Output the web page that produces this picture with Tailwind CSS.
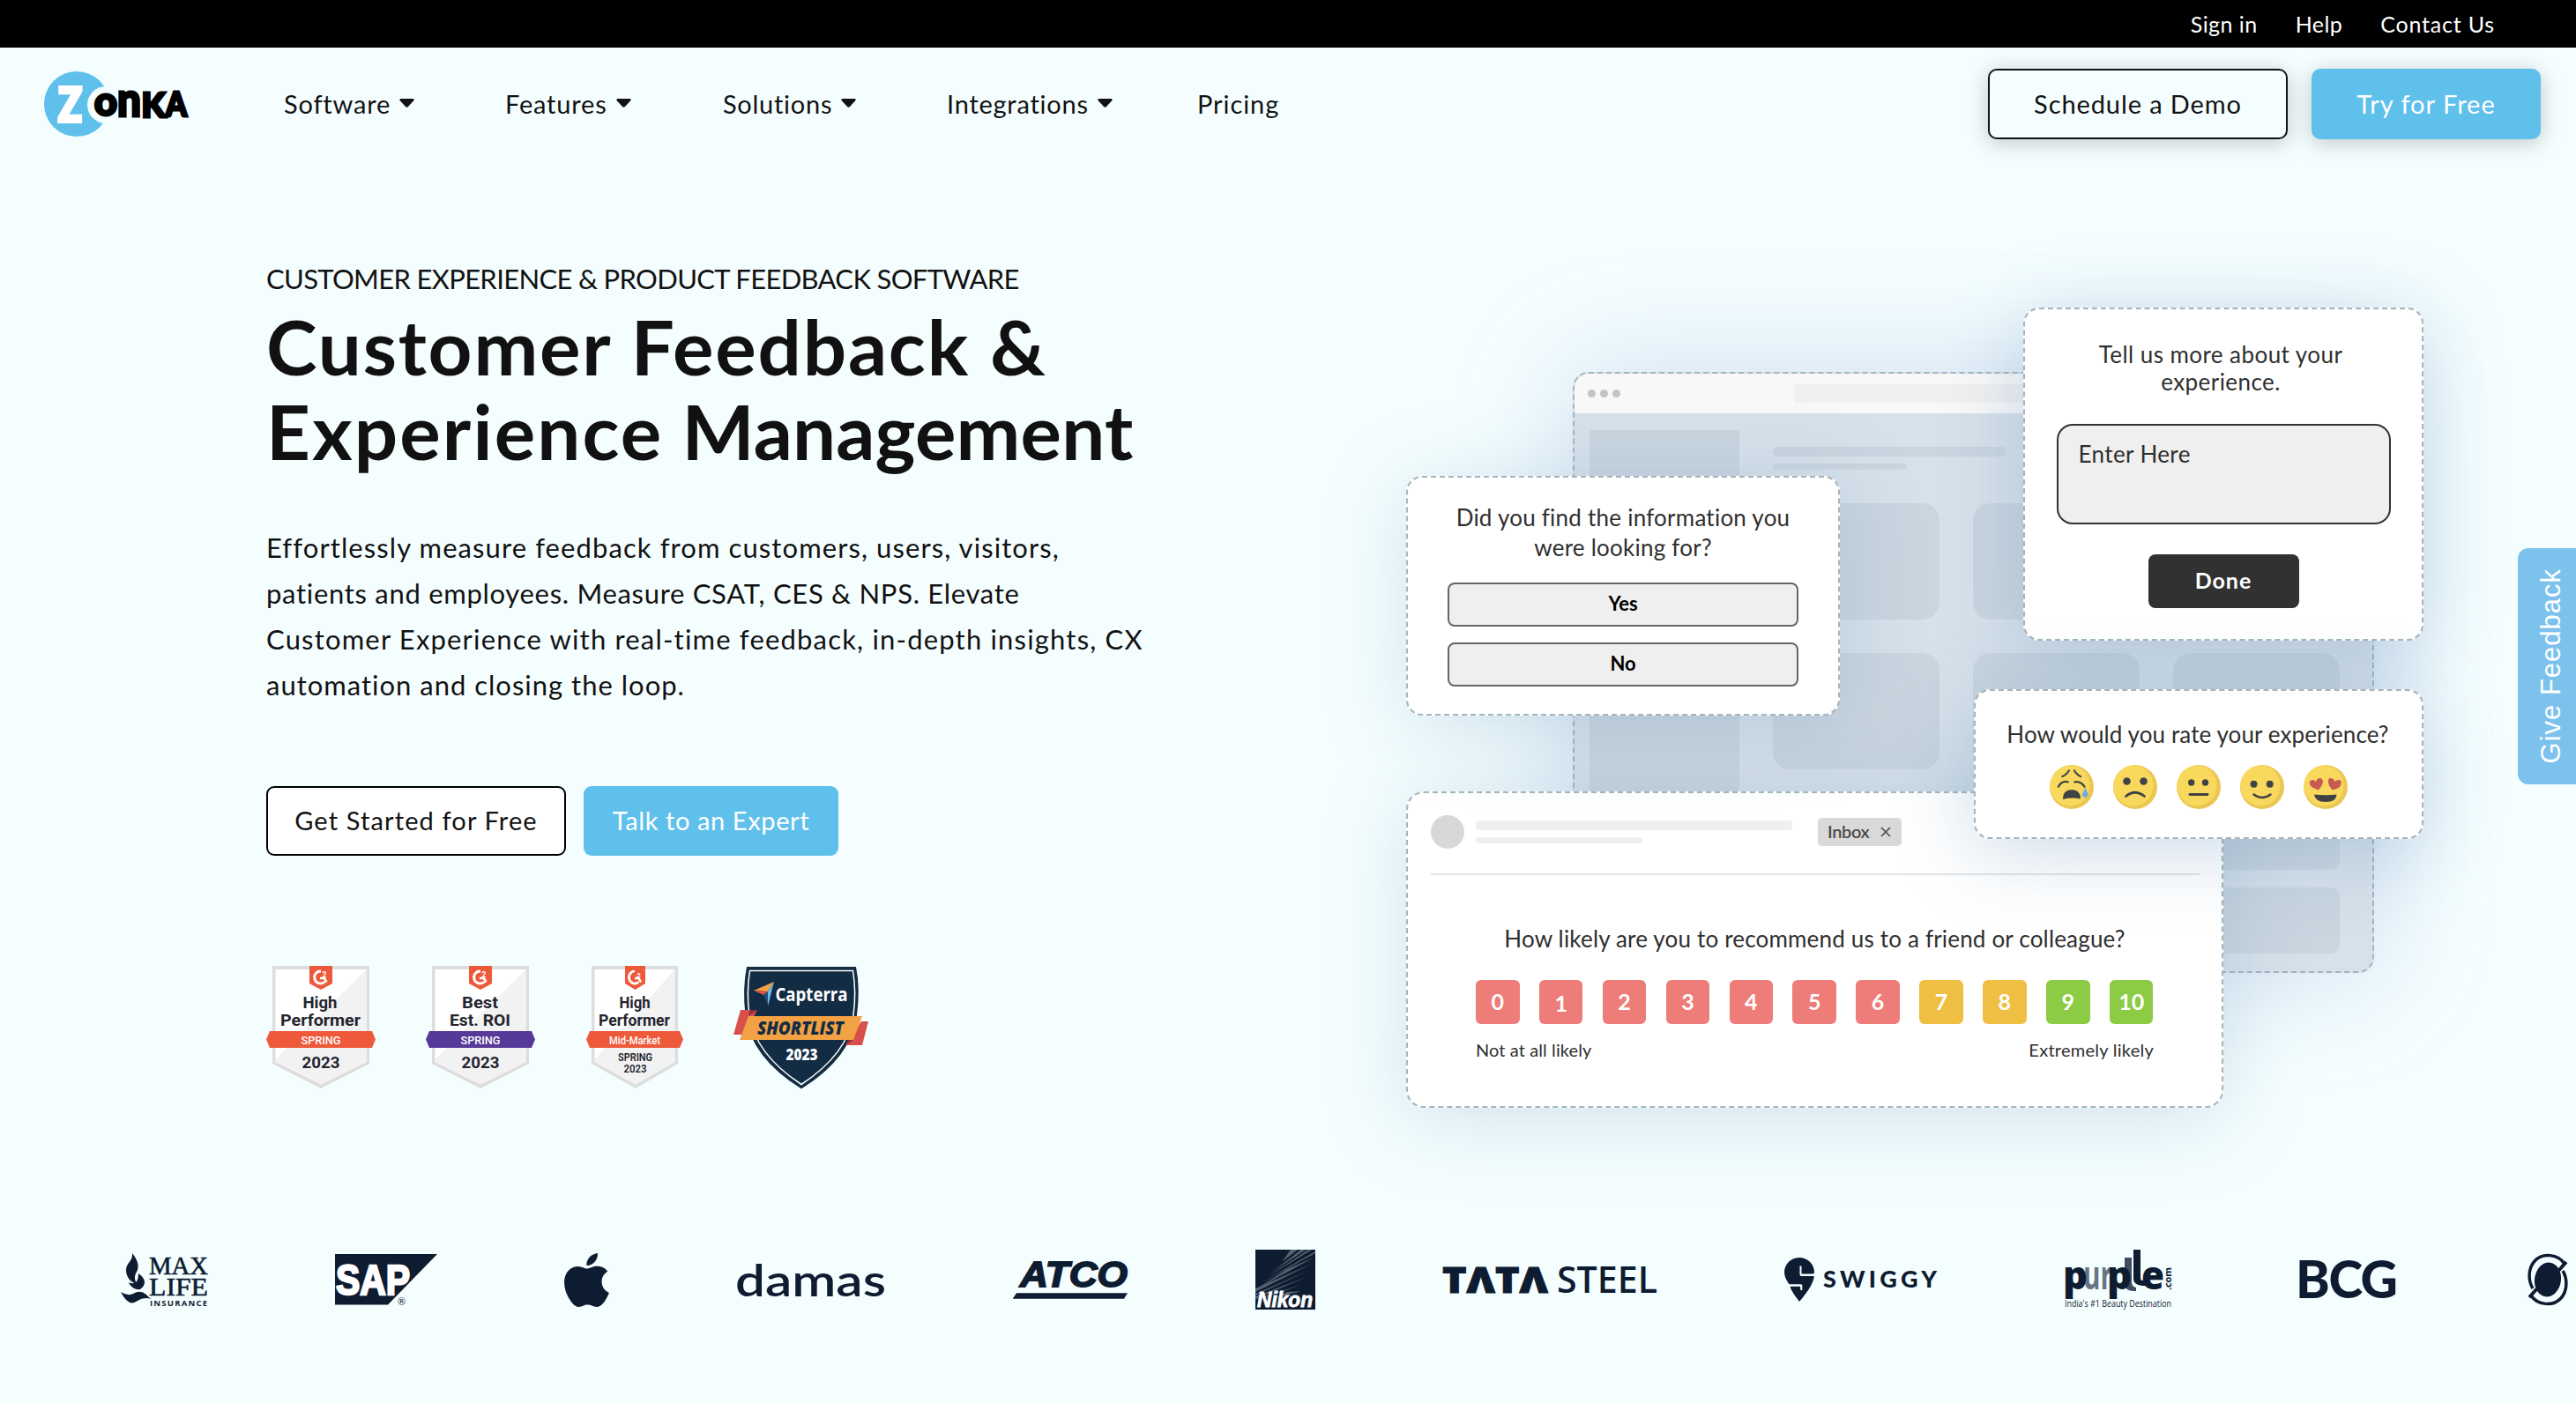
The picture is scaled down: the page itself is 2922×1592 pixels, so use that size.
<!DOCTYPE html>
<html lang="en">
<head>
<meta charset="utf-8">
<title>Zonka Feedback</title>
<script src="https://cdn.jsdelivr.net/npm/@tailwindcss/browser@4"></script>
</head>
<body class="w-[2922px] h-[1592px] overflow-hidden bg-[#f5feff] text-[#121212] font-['Lato',sans-serif] relative">

<!-- Utility bar -->
<div class="h-[54px] bg-black text-white flex items-center justify-end gap-[43px] pr-[92px] text-[25px] leading-none">
  <a class="tracking-[0.018em]">Sign in</a>
  <a class="tracking-[0.018em]">Help</a>
  <a class="tracking-[0.032em]">Contact Us</a>
</div>

<!-- Main navigation -->
<header class="h-32 flex items-center pl-[50px] pr-10 text-[29px] leading-none">
  <svg class="w-[168px] h-[76px] mr-[104px] -mt-px" viewBox="50 80 168 76">
    <circle cx="87" cy="118" r="37" fill="#5fc0ec"/>
    <circle cx="120" cy="119" r="21" fill="#f5feff"/>
    <text x="66" y="138" font-family="Lato" font-weight="900" font-size="54" fill="#fff" stroke="#fff" stroke-width="4" textLength="27" lengthAdjust="spacingAndGlyphs">Z</text>
    <g font-family="Lato" font-weight="900" stroke="#000" stroke-width="3" fill="#000">
      <text x="107" y="131" font-size="46" textLength="26" lengthAdjust="spacingAndGlyphs">o</text>
      <text x="133" y="132" font-size="53" textLength="27" lengthAdjust="spacingAndGlyphs">n</text>
      <text x="160.500" y="133" font-size="38" textLength="27" lengthAdjust="spacingAndGlyphs">K</text>
      <text x="188" y="132" font-size="37" textLength="24" lengthAdjust="spacingAndGlyphs">A</text>
    </g>
  </svg>
  <nav class="flex items-center -mt-0.5">
    <a class="flex items-center gap-2.5 w-[251px]"><span class="tracking-[0.028em]">Software</span><svg class="w-[17px] h-[10px]" viewBox="0 0 17 10"><path d="M1.500 0h14q2 .5.700 2.200L10 9q-1.500 1.500-3 0L.8 2.200Q-.5.500 1.500 0z" fill="#121212"/></svg></a>
    <a class="flex items-center gap-2.5 w-[247px]"><span class="tracking-[0.028em]">Features</span><svg class="w-[17px] h-[10px]" viewBox="0 0 17 10"><path d="M1.500 0h14q2 .5.700 2.200L10 9q-1.500 1.500-3 0L.8 2.200Q-.5.500 1.500 0z" fill="#121212"/></svg></a>
    <a class="flex items-center gap-2.5 w-[254px]"><span class="tracking-[0.025em]">Solutions</span><svg class="w-[17px] h-[10px]" viewBox="0 0 17 10"><path d="M1.500 0h14q2 .5.700 2.200L10 9q-1.500 1.500-3 0L.8 2.200Q-.5.500 1.500 0z" fill="#121212"/></svg></a>
    <a class="flex items-center gap-2.5 w-[284px]"><span class="tracking-[0.026em]">Integrations</span><svg class="w-[17px] h-[10px]" viewBox="0 0 17 10"><path d="M1.500 0h14q2 .5.700 2.200L10 9q-1.500 1.500-3 0L.8 2.200Q-.5.500 1.500 0z" fill="#121212"/></svg></a>
    <a class="tracking-[0.032em]">Pricing</a>
  </nav>
  <div class="ml-auto flex gap-[27px]">
    <a class="w-[340px] h-20 rounded-[10px] border-2 border-[#121212] bg-[#f5feff] flex items-center justify-center pb-0.5 tracking-[0.031em] shadow-[0_4px_24px_rgba(0,0,0,0.22)]">Schedule a Demo</a>
    <a class="w-[260px] h-20 rounded-[10px] bg-[#5fc0ec] text-white flex items-center justify-center pb-0.5 tracking-[0.035em] shadow-[0_4px_24px_rgba(0,0,0,0.22)]">Try for Free</a>
  </div>
</header>

<!-- Hero -->
<main class="flex pl-[302px] h-[1236px]">
  <section class="w-[1293px] pt-[114px]">
    <p class="text-[31px] leading-10 -tracking-[0.0215em]">CUSTOMER EXPERIENCE &amp; PRODUCT FEEDBACK SOFTWARE</p>
    <h1 class="mt-[9px] text-[87px] leading-24 font-bold text-[#111]"><span class="block tracking-[0.021em]">Customer Feedback &amp;</span><span class="block"><span class="tracking-[0.0245em]">Experience</span> <span class="tracking-[0.002em]">Management</span></span></h1>
    <p class="mt-[58px] text-[31px] leading-[52px] tracking-[0.035em] whitespace-nowrap"><span class="block">Effortlessly measure feedback from customers, users, visitors,</span><span class="block tracking-[0.0225em]">patients and employees. Measure CSAT, CES &amp; NPS. Elevate</span><span class="block tracking-[0.038em]">Customer Experience with real-time feedback, in-depth insights, CX</span><span class="block tracking-[0.032em]">automation and closing the loop.</span></p>
    <div class="mt-[89px] flex gap-5 text-[29px] leading-none">
      <a class="w-[340px] h-[79px] rounded-[9px] border-2 border-black bg-white flex items-center justify-center pb-0.5 tracking-[0.039em]">Get Started for Free</a>
      <a class="w-[289px] h-[79px] rounded-[9px] bg-[#5fc0ec] text-white flex items-center justify-center pb-0.5 tracking-[0.021em]">Talk to an Expert</a>
    </div>

    <!-- Award badges -->
    <div class="mt-[125px] flex items-start">
      <svg class="w-[124px] h-[140px]" viewBox="0 0 124 140" font-family="Roboto" font-weight="700" text-anchor="middle" fill="#23242f">
        <path d="M7 0h110v111l-55 28-55-28z" fill="#dcdedd"/><path d="M10.500 4h103v105L62 134.500 10.500 109z" fill="#fff"/><path d="M113.500 4v105L62 134.500 10.500 109v-3z" fill="#f2f2f2"/>
        <path d="M49 0h26v20l-13 7-13-7z" fill="#ee593b"/><path d="M62 6a7 7 0 1 0 4.500 12" fill="none" stroke="#fff" stroke-width="2.800"/><path d="M61 14h5l2.500 4.500" fill="none" stroke="#fff" stroke-width="2.600"/><text x="66" y="12.500" font-size="8.500" fill="#fff">2</text>
        <text x="61" y="48" font-size="19" textLength="39" lengthAdjust="spacingAndGlyphs">High</text>
        <text x="61.500" y="68" font-size="19" textLength="91" lengthAdjust="spacingAndGlyphs">Performer</text>
        <path d="M4 74h116l4 9.500-4 9.500H4l-4-9.500z" fill="#ee593b"/>
        <text x="62" y="88.500" font-size="12.500" font-weight="500" fill="#fff" textLength="45" lengthAdjust="spacingAndGlyphs">SPRING</text>
        <text x="62" y="115.500" font-size="19" textLength="43" lengthAdjust="spacingAndGlyphs">2023</text>
      </svg>
      <svg class="w-[124px] h-[140px] ml-[57px]" viewBox="0 0 124 140" font-family="Roboto" font-weight="700" text-anchor="middle" fill="#23242f">
        <path d="M7 0h110v111l-55 28-55-28z" fill="#dcdedd"/><path d="M10.500 4h103v105L62 134.500 10.500 109z" fill="#fff"/><path d="M113.500 4v105L62 134.500 10.500 109v-3z" fill="#f2f2f2"/>
        <path d="M49 0h26v20l-13 7-13-7z" fill="#ee593b"/><path d="M62 6a7 7 0 1 0 4.500 12" fill="none" stroke="#fff" stroke-width="2.800"/><path d="M61 14h5l2.500 4.500" fill="none" stroke="#fff" stroke-width="2.600"/><text x="66" y="12.500" font-size="8.500" fill="#fff">2</text>
        <text x="61.500" y="48" font-size="19" textLength="41" lengthAdjust="spacingAndGlyphs">Best</text>
        <text x="61.500" y="68" font-size="19" textLength="69" lengthAdjust="spacingAndGlyphs">Est. ROI</text>
        <path d="M4 74h116l4 9.500-4 9.500H4l-4-9.500z" fill="#573998"/>
        <text x="62" y="88.500" font-size="12.500" font-weight="500" fill="#fff" textLength="45" lengthAdjust="spacingAndGlyphs">SPRING</text>
        <text x="62" y="115.500" font-size="19" textLength="43" lengthAdjust="spacingAndGlyphs">2023</text>
      </svg>
      <svg class="w-[110px] h-[140px] ml-[58px]" viewBox="0 0 110 140" font-family="Roboto" font-weight="700" text-anchor="middle" fill="#23242f">
        <path d="M6 0h98v111l-48 28-50-28z" fill="#dcdedd"/><path d="M9.500 4h91v105L56 134.500 9.500 109z" fill="#fff"/><path d="M100.500 4v105L56 134.500 9.500 109v-3z" fill="#f2f2f2"/>
        <path d="M44 0h23v20l-11.500 7L44 20z" fill="#ee593b"/><path d="M55 6a6.500 7 0 1 0 4.500 12" fill="none" stroke="#fff" stroke-width="2.700"/><path d="M55 14h4.500l2.500 4.500" fill="none" stroke="#fff" stroke-width="2.500"/><text x="59.500" y="12.500" font-size="8" fill="#fff">2</text>
        <text x="55" y="48" font-size="19" textLength="35" lengthAdjust="spacingAndGlyphs">High</text>
        <text x="54.500" y="68" font-size="19" textLength="81" lengthAdjust="spacingAndGlyphs">Performer</text>
        <path d="M4 74h102l4 9.500-4 9.500H4l-4-9.500z" fill="#ee593b"/>
        <text x="55" y="88.500" font-size="12.500" font-weight="500" fill="#fff" textLength="58" lengthAdjust="spacingAndGlyphs">Mid-Market</text>
        <text x="55.500" y="108" font-size="13.500" font-weight="600" textLength="39" lengthAdjust="spacingAndGlyphs">SPRING</text>
        <text x="55.500" y="120.500" font-size="13" font-weight="600" textLength="26" lengthAdjust="spacingAndGlyphs">2023</text>
      </svg>
      <svg class="w-[154px] h-[140px] ml-[57px]" viewBox="0 -1 154 140" font-family="'Open Sans'" font-weight="700">
        <path d="M15 0h124q5 25 1 55-6 48-63 83.500Q20 103 13.500 55q-3.500-30 1.500-55z" fill="#122c43"/>
        <path d="M18.500 4.500h117q4 25 .5 50-6 44-59 79-53-35-59-79-3.500-25 .5-50z" fill="none" stroke="#fff" stroke-width="1.500"/>
        <path d="M23 27l23-10-7 11z" fill="#f3a146"/><path d="M46 17l-7 28V28z" fill="#68b8e8"/><path d="M39 28v15l-5-11z" fill="#1b4f7b"/><path d="M23 27l16 1-5 4z" fill="#d8554a"/>
        <text x="47.500" y="38.500" font-size="22" fill="#fff" textLength="82" lengthAdjust="spacingAndGlyphs" font-weight="700">Capterra</text>
        <path d="M8 49h19L12 77H0z" fill="#d8504b"/><path d="M145 62h8l-7 27h-19z" fill="#d8504b"/><path d="M17 56l10-7h-8z" fill="#8d2f35"/><path d="M127 89l9-6h-6z" fill="#8d2f35"/>
        <path d="M17 56h129l-10 27H7z" fill="#f2a144"/>
        <text x="27" y="77" font-size="20.500" font-style="italic" font-weight="800" fill="#122c43" textLength="98" lengthAdjust="spacingAndGlyphs">SHORTLIST</text>
        <text x="59.500" y="106" font-size="17.500" font-weight="800" fill="#fff" textLength="36" lengthAdjust="spacingAndGlyphs">2023</text>
      </svg>
    </div>
  </section>

  <!-- Illustration: overlapping survey windows -->
  <section class="relative mt-[168px] w-[1154px] h-[906px] text-[#2f2f2f] leading-none whitespace-nowrap">

    <!-- Browser window -->
    <div class="absolute left-[189px] top-[72px] w-[909px] h-[682px] rounded-[18px] border-2 border-dashed border-[#a5b4bd] bg-[#d6e1ea] overflow-hidden shadow-[0_0_130px_rgba(95,130,195,0.27)]">
      <div class="h-[45px] bg-[#f8f8f8] flex items-center pl-[15px] gap-[5.500px]">
        <i class="size-[8.500px] rounded-full bg-[#c4c4c4]"></i><i class="size-[8.500px] rounded-full bg-[#c4c4c4]"></i><i class="size-[8.500px] rounded-full bg-[#c4c4c4]"></i>
        <i class="ml-[192px] w-[440px] h-[21px] bg-[#f0f0f0]"></i>
      </div>
      <div class="flex pl-[17px] pt-[19px]">
        <div class="w-[170px] h-[560px] bg-[#c9d5df]"></div>
        <div class="ml-[38px] pt-[19px]">
          <div class="w-[265px] h-[11px] rounded-full bg-[#c9d5df]"></div>
          <div class="mt-2 w-[151px] h-[7px] rounded-full bg-[#c9d5df]"></div>
          <div class="mt-[38px] grid grid-cols-[189px_189px_189px] gap-x-[38px]">
            <i class="h-[132px] mb-[38px] rounded-[20px] bg-[#c9d5df]"></i><i class="h-[132px] rounded-[20px] bg-[#c9d5df]"></i><i class="h-[132px] rounded-[20px] bg-[#c9d5df]"></i>
            <i class="h-[132px] mb-[38px] rounded-[20px] bg-[#c9d5df]"></i><i class="h-[132px] rounded-[20px] bg-[#c9d5df]"></i><i class="h-[132px] rounded-[20px] bg-[#c9d5df]"></i>
            <i class="h-[76px] mb-5 rounded-[10px] bg-[#c9d5df]"></i><i class="h-[76px] rounded-[10px] bg-[#c9d5df]"></i><i class="h-[76px] rounded-[10px] bg-[#c9d5df]"></i>
            <i class="h-[75px] rounded-[10px] bg-[#c9d5df]"></i><i class="h-[75px] rounded-[10px] bg-[#c9d5df]"></i><i class="h-[75px] rounded-[10px] bg-[#c9d5df]"></i>
          </div>
        </div>
      </div>
    </div>

    <!-- Email survey -->
    <div class="absolute left-0 top-[548px] w-[927px] h-[359px] rounded-[20px] border-2 border-dashed border-[#a5b4bd] bg-white pl-[26px] pr-[25px] pt-6 shadow-[0_12px_90px_rgba(100,145,180,0.25)]">
      <div class="flex items-center h-10">
        <div class="size-[38px] rounded-full bg-[#d8d8d8]"></div>
        <div class="ml-[13px]">
          <div class="w-[359px] h-[11px] rounded-[4px] bg-[#eeefef]"></div>
          <div class="mt-2 w-[189px] h-[7px] rounded-[3px] bg-[#eeefef]"></div>
        </div>
        <div class="ml-[29px] w-[95px] h-8 rounded-[5px] bg-[#d9d9d9] flex items-center pl-[11px] pb-0.5 text-[20px] font-semibold text-[#4a4a4a] -tracking-[0.02em]">Inbox<svg class="ml-[13px] mt-0.5 size-3" viewBox="0 0 12 12"><path d="M1 1l10 10M11 1L1 11" stroke="#4a4a4a" stroke-width="1.600"/></svg></div>
      </div>
      <div class="mt-[27px] h-0.5 bg-[#e2e4e6]"></div>
      <div class="mt-[56px] -ml-px text-center text-[26px] leading-8 tracking-[0.007em]">How likely are you to recommend us to a friend or colleague?</div>
      <div class="mt-[31px] ml-[51px] flex gap-[22.400px] text-white text-[25px] font-bold">
        <span class="w-[49.500px] h-[50px] rounded-[6px] bg-[#ee7c78] flex items-center justify-center pb-0.5">0</span>
        <span class="w-[49.500px] h-[50px] rounded-[6px] bg-[#ee7c78] flex items-center justify-center pt-0.5">1</span>
        <span class="w-[49.500px] h-[50px] rounded-[6px] bg-[#ee7c78] flex items-center justify-center pb-0.5">2</span>
        <span class="w-[49.500px] h-[50px] rounded-[6px] bg-[#ee7c78] flex items-center justify-center pb-0.5">3</span>
        <span class="w-[49.500px] h-[50px] rounded-[6px] bg-[#ee7c78] flex items-center justify-center pb-0.5">4</span>
        <span class="w-[49.500px] h-[50px] rounded-[6px] bg-[#ee7c78] flex items-center justify-center pb-0.5">5</span>
        <span class="w-[49.500px] h-[50px] rounded-[6px] bg-[#ee7c78] flex items-center justify-center pb-0.5">6</span>
        <span class="w-[49.500px] h-[50px] rounded-[6px] bg-[#efbf43] flex items-center justify-center pb-0.5">7</span>
        <span class="w-[49.500px] h-[50px] rounded-[6px] bg-[#efbf43] flex items-center justify-center pb-0.5">8</span>
        <span class="w-[49.500px] h-[50px] rounded-[6px] bg-[#8ccb44] flex items-center justify-center pb-0.5">9</span>
        <span class="w-[49.500px] h-[50px] rounded-[6px] bg-[#8ccb44] flex items-center justify-center pb-0.5">10</span>
      </div>
      <div class="mt-[17px] ml-[51px] mr-[52px] flex justify-between text-[20px] leading-6"><span class="tracking-[0.005em]">Not at all likely</span><span class="tracking-[0.013em]">Extremely likely</span></div>
    </div>

    <!-- Yes / no survey -->
    <div class="absolute left-0 top-[190px] w-[492px] h-[272px] rounded-[18px] border-2 border-dashed border-[#a5b4bd] bg-white pt-[28px] flex flex-col items-center shadow-[0_12px_90px_rgba(100,145,180,0.25)]">
      <p class="text-center text-[26px] leading-[34px] tracking-[0.009em]">Did you find the information you<br>were looking for?</p>
      <div class="mt-[23px] w-[398px] h-[50px] rounded-[8px] border-2 border-[#666] bg-[#efefef] flex items-center justify-center pb-0.5 text-[22px] font-bold text-black">Yes</div>
      <div class="mt-[18px] w-[398px] h-[50px] rounded-[8px] border-2 border-[#666] bg-[#efefef] flex items-center justify-center pb-0.5 text-[22px] font-bold text-black">No</div>
    </div>

    <!-- Open comment survey -->
    <div class="absolute left-[700px] top-[-1px] w-[454px] h-[378px] rounded-[18px] border-2 border-dashed border-[#a5b4bd] bg-white pt-[36px] flex flex-col items-center shadow-[0_14px_90px_rgba(95,140,185,0.32)]">
      <p class="text-center text-[26px] leading-[31px] tracking-[0.017em] pr-[6px]">Tell us more about your<br>experience.</p>
      <div class="mt-[32px] w-[379px] h-[114px] rounded-[18px] border-2 border-[#333] bg-[#efefef] pl-[23px] pt-4 text-[26px] leading-8 tracking-[0.015em]">Enter Here</div>
      <div class="mt-[34px] w-[171px] h-[61px] rounded-[8px] bg-[#313131] text-white flex items-center justify-center pb-0.5 text-[25px] font-bold tracking-[0.04em]">Done</div>
    </div>

    <!-- Emoji rating survey -->
    <div class="absolute left-[644px] top-[432px] w-[510px] h-[170px] rounded-[18px] border-2 border-dashed border-[#a5b4bd] bg-white pt-[32px] flex flex-col items-center shadow-[0_14px_90px_rgba(95,140,185,0.32)]">
      <p class="text-[26px] leading-[34px] -ml-1 tracking-[0.004em] pl-0.5">How would you rate your experience?</p>
      <div class="mt-[18px] flex gap-[22px]">
        <svg class="size-[50px]" viewBox="0 0 50 50"><circle cx="25" cy="25" r="25" fill="#ecc652"/><ellipse cx="23" cy="23.500" rx="22.500" ry="23" fill="#f9d95d"/><g fill="none" stroke="#404346" stroke-width="1.900"><path d="M13.500 13.500q6-2.500 9-8M36 13.500q-6-2.500-8.500-8"/><path d="M9.500 25.500q4-8.500 12-6M27.500 19.500q8-2 12.500 6" stroke-width="2.300"/></g><path d="M15 38.500q0-10.500 10-10.500t10 10.500q-10-2-20 .5z" fill="#404346"/><path d="M40.500 26q3 6 3 8t-3.200 3.200q-3.200-1-3.200-3.200t3.400-8z" fill="#6fa9e8"/></svg>
        <svg class="size-[50px]" viewBox="0 0 50 50"><circle cx="25" cy="25" r="25" fill="#ecc652"/><ellipse cx="23" cy="23.500" rx="22.500" ry="23" fill="#f9d95d"/><circle cx="15.500" cy="18.500" r="4.300" fill="#404346"/><circle cx="34.500" cy="18.500" r="4.300" fill="#404346"/><path d="M14.500 35.500q10-8.500 21 0" fill="none" stroke="#404346" stroke-width="2.800" stroke-linecap="round"/></svg>
        <svg class="size-[50px]" viewBox="0 0 50 50"><circle cx="25" cy="25" r="25" fill="#ecc652"/><ellipse cx="23" cy="23.500" rx="22.500" ry="23" fill="#f9d95d"/><circle cx="16.700" cy="20" r="3.700" fill="#404346"/><circle cx="32.500" cy="20" r="3.700" fill="#404346"/><path d="M15 33.500h20" stroke="#404346" stroke-width="2.800" stroke-linecap="round"/></svg>
        <svg class="size-[50px]" viewBox="0 0 50 50"><circle cx="25" cy="25" r="25" fill="#ecc652"/><ellipse cx="23" cy="23.500" rx="22.500" ry="23" fill="#f9d95d"/><circle cx="15.500" cy="21.700" r="4" fill="#404346"/><circle cx="33.700" cy="21.700" r="4" fill="#404346"/><path d="M15.500 33.500q9.500 7 19 0" fill="none" stroke="#404346" stroke-width="2.500" stroke-linecap="round"/></svg>
        <svg class="size-[50px]" viewBox="0 0 50 50"><circle cx="25" cy="25" r="25" fill="#ecc652"/><ellipse cx="23" cy="23.500" rx="22.500" ry="23" fill="#f9d95d"/><g fill="#c65b52"><path d="M17 28.500q-9-3-10-6.500t2-5q3-.5 5 2 1-4 4.500-4t3.500 4.500q-1 5-5 9z"/><path d="M33 28.500q-4.500-4-5-9t3-4.500 4.500 4q2-2.500 5-2t2 5-9.500 6.500z"/></g><path d="M12 33.500q13 1.500 25.500 0-.5 8.500-12.500 8.500t-13-8.500z" fill="#404346"/></svg>
      </div>
    </div>
  </section>
</main>

<!-- Customer logos -->
<div class="w-[2922px] h-[68px] pl-[137px] flex items-center gap-36 [&>svg]:shrink-0 [&>svg]:overflow-visible">
  <svg class="w-[99px] h-[61px]" viewBox="0 0 99 61" fill="#0e1c31"><path d="M13 0c8 10 8 17 4 23-2 4-1 8 1 12-7-2-12-8-12-16 0-8 8-10 7-19z"/><path d="M20 23c9 6 9 13 2 18-6 1-11-3-13-8 6 3 11 1 11-10z"/><path d="M0 44q8 5 14 2 8-5 15 1 2 3 6 5-9-3-16 2-10 8-19-10z"/><text x="32" y="24" font-family="Liberation Serif" font-size="29.500" textLength="67" lengthAdjust="spacingAndGlyphs" stroke="#0e1c31" stroke-width=".6">MAX</text><text x="32" y="48" font-family="Liberation Serif" font-size="30" textLength="67" lengthAdjust="spacingAndGlyphs" stroke="#0e1c31" stroke-width=".6">LIFE</text><text x="33" y="60" font-family="Open Sans" font-weight="700" font-size="9.500" textLength="65">INSURANCE</text></svg>
  <svg class="w-[116px] h-[58px]" viewBox="0 0 116 58"><path d="M0 0h116L60 57.500H0z" fill="#0e1c31"/><text x="1" y="46" font-family="Liberation Sans" font-weight="700" font-size="49" fill="#fff" stroke="#fff" stroke-width="2.500" textLength="84" lengthAdjust="spacingAndGlyphs">SAP</text><text x="71" y="57.500" font-family="Lato" font-size="11" fill="#0e1c31">®</text></svg>
  <svg class="w-[51px] h-[61px]" viewBox="2.200 0 19.600 24" preserveAspectRatio="none"><path fill="#0e1c31" d="M12.152 6.896c-.948 0-2.415-1.078-3.960-1.040-2.040.027-3.910 1.183-4.961 3.014-2.117 3.675-.546 9.103 1.519 12.090 1.013 1.454 2.208 3.090 3.792 3.039 1.520-.065 2.090-.987 3.935-.987 1.831 0 2.350.987 3.960.948 1.637-.026 2.676-1.480 3.676-2.948 1.156-1.688 1.636-3.325 1.662-3.415-.039-.013-3.182-1.221-3.220-4.857-.026-3.040 2.480-4.494 2.597-4.559-1.429-2.090-3.623-2.324-4.390-2.376-2-.156-3.675 1.090-4.610 1.090zM15.530 3.830c.843-1.012 1.400-2.427 1.245-3.830-1.207.052-2.662.805-3.532 1.818-.780.896-1.454 2.338-1.273 3.714 1.338.104 2.715-.688 3.559-1.701"/></svg>
  <svg class="w-[169px] h-[44px]" viewBox="0 0 169 44"><text x="-1" y="41" font-family="Lato" font-weight="600" font-size="50" fill="#0e1c31" textLength="171" lengthAdjust="spacingAndGlyphs">damas</text></svg>
  <svg class="w-[132px] h-[44px]" viewBox="0 0 132 44" fill="#0e1c31"><text x="9" y="30" font-family="Liberation Sans" font-weight="700" font-style="italic" font-size="41" stroke="#0e1c31" stroke-width="1.800" textLength="122" lengthAdjust="spacingAndGlyphs">ATCO</text><path d="M5 37.300h126l-4 6.400H.6z"/></svg>
  <svg class="w-[68px] h-[68px]" viewBox="0 0 68 68"><path d="M0 0h68v68H0z" fill="#0e1c31"/><g fill="#56636f"><path d="M40 0h8L30 14z"/><path d="M52 0h5L18 26z"/><path d="M60 0h4L12 32z"/><path d="M68 2v2L6 38 42 17z"/><path d="M66 9L2 44l34-22z"/><path d="M64 16L0 48v-4z"/><path d="M62 23L0 52v-2z"/><path d="M58 31L0 56v-3z"/><path d="M55 39L6 56l-6 0z"/><path d="M52 47L22 55l14-7z"/></g><text x="2" y="64.500" font-family="Liberation Sans" font-weight="700" font-style="italic" font-size="23" fill="#fff" stroke="#fff" stroke-width=".8" textLength="63" lengthAdjust="spacingAndGlyphs">Nikon</text></svg>
  <svg class="w-[244px] h-[30px]" viewBox="0 0 244 30" fill="#0e1c31"><text x="0" y="30" font-family="Open Sans" font-weight="800" font-size="41.500" stroke="#0e1c31" stroke-width="1" textLength="120" lengthAdjust="spacingAndGlyphs">TΛTΛ</text><text x="130" y="29.500" font-family="Open Sans" font-weight="600" font-size="41" textLength="114" lengthAdjust="spacingAndGlyphs">STEEL</text></svg>
  <svg class="w-[174px] h-[50px]" viewBox="0 0 174 50" fill="#0e1c31"><path d="M17 0c10 0 17 8 17 16.500 0 1-.5 2-2 2H20.500c-.8 0-1-.5-1-1V9.500h-2V19c0 1.500 1 2 2 2h13c1.500 0 1.500 1 1 2.500C31 33 23 43 17 50 14 46 10 41 7 34.500c-.5-1 0-1.800 1-1.800h9c.8 0 1.300.3 1.300 1.300v3h2v-5c0-1.200-.8-1.700-1.800-1.700H7c-1.500 0-2.200-.5-2.700-1.800C2 25 0 21 0 16.500 0 8 7 0 17 0z"/><text x="44" y="34" font-family="Lato" font-weight="900" font-size="27" textLength="129">SWIGGY</text></svg>
  <svg class="w-[122px] h-[68px]" viewBox="0 0 122 68" fill="#0e1c31" font-family="Open Sans"><g font-weight="800" font-size="44"><text x="21" y="45" fill="#697483" font-weight="700" textLength="33" lengthAdjust="spacingAndGlyphs">ur</text><text x="-2" y="45" textLength="28" lengthAdjust="spacingAndGlyphs">p</text><path d="M68 9h8v28q0 5 5 6v4q-13 1-13-9z" fill="#3f4c5e"/><text x="48" y="45" textLength="28" lengthAdjust="spacingAndGlyphs">p</text><path d="M78 0h8v32q0 4 6 3v6q-14 0-14-8z"/><text x="87" y="45" textLength="26" lengthAdjust="spacingAndGlyphs">e</text></g><text transform="translate(121 46) rotate(-90)" font-size="11" font-weight="700" textLength="26">.com</text><text x="0" y="65" font-size="10.500" font-weight="500" textLength="121" lengthAdjust="spacingAndGlyphs">India's #1 Beauty Destination</text></svg>
  <svg class="w-[110px] h-[44px]" viewBox="0 0 110 44" fill="#0e1c31"><text x="-4" y="42.500" font-family="Lato" font-weight="900" font-size="58.500" textLength="116" lengthAdjust="spacing">BCG</text></svg>
  <svg class="w-[52px] h-[60px]" viewBox="0 0 52 60"><ellipse cx="28" cy="30" rx="15" ry="19.500" fill="#0e1c31" transform="rotate(8 28 30)"/><g fill="none" stroke="#0e1c31"><path d="M47 12C40 1 22-1 13 9 5 18 6 32 11 40" stroke-width="3.500"/><path d="M9 48C16 59 34 61 43 51 51 42 50 28 45 20" stroke-width="3.500"/><path d="M49 10l-9 10M7 50l9-10" stroke-width="4"/></g></svg>
</div>

<!-- Feedback tab -->
<div class="absolute left-[2856px] top-[622px] w-[66px] h-[268px] rounded-l-xl bg-[#7cc2ed] flex items-center justify-center pl-2">
  <span class="[writing-mode:vertical-rl] rotate-180 font-['Liberation_Sans',sans-serif] text-[31px] leading-none tracking-[0.032em] text-white whitespace-nowrap">Give Feedback</span>
</div>
</body>
</html>
